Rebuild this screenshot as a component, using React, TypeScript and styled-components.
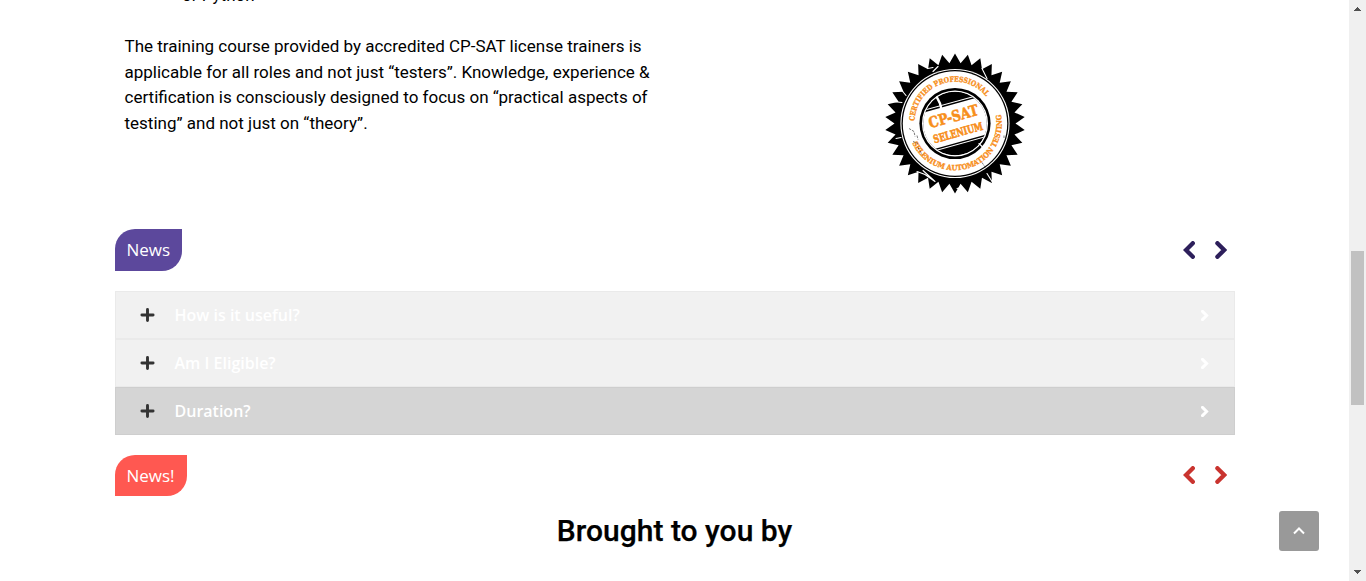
import React from "react";
import styled, { createGlobalStyle } from "styled-components";

const GlobalStyle = createGlobalStyle`
  * { box-sizing: border-box; }
  body { margin: 0; background: #fff; overflow: hidden; }
`;

const Page = styled.div`
  display: flex;
  height: 581px;
  overflow: hidden;
  font-family: Roboto, "Liberation Sans", sans-serif;
  color: #000;
`;

const Main = styled.main`
  flex: 1;
  height: 581px;
  padding: 0 114px 0 115px;
  overflow: hidden;
`;

const Intro = styled.section`
  display: grid;
  grid-template-columns: 560px 560px;
  height: 229px;
`;

const Copy = styled.div`
  padding-left: 9.5px;
  font-size: 17px;
  line-height: 25.6px;
`;

const ListTail = styled.div`
  height: 26px;
  margin: -17px 0 25px 57.5px;
`;

const Paragraph = styled.p`
  margin: 0;
  white-space: nowrap;
`;

const SealHolder = styled.div`
  display: flex;
  justify-content: center;
  padding-top: 48px;
`;

const NewsBar = styled.div<{ $height: number }>`
  display: flex;
  justify-content: space-between;
  height: ${(p) => p.$height}px;
  padding-right: 8px;
`;

const Tag = styled.span<{ $color: string; $width: number }>`
  display: flex;
  align-items: center;
  width: ${(p) => p.$width}px;
  height: 100%;
  padding: 0 0 1px 11.5px;
  border-radius: 20px 0;
  background: ${(p) => p.$color};
  color: #fff;
  font: 400 17px/1 "Open Sans", sans-serif;
`;

const Arrows = styled.div<{ $color: string; $top: number }>`
  display: flex;
  gap: 20px;
  padding-top: ${(p) => p.$top}px;
  color: ${(p) => p.$color};
`;

const Accordion = styled.div`
  margin: 20px 0;
`;

const Row = styled.div<{ $active?: boolean }>`
  display: flex;
  align-items: center;
  height: 48px;
  padding: 0 25.5px 0 24px;
  border: 1px solid ${(p) => (p.$active ? "#cecece" : "#eaeaea")};
  background: ${(p) => (p.$active ? "#d5d5d5" : "#f1f1f1")};
  color: #fff;
  font: 600 16px/1 "Open Sans", sans-serif;
`;

const PlusIcon = styled.svg`
  width: 15px;
  height: 14px;
  margin-right: 19.5px;
  color: #333;
`;

const RowArrow = styled.span`
  display: flex;
  margin-left: auto;
`;

const Heading = styled.h2`
  margin: 17px 1px 0 0;
  font-size: 30px;
  font-weight: 500;
  line-height: 36px;
  letter-spacing: 0.03px;
  text-align: center;
  -webkit-text-stroke: 0.25px #000;
`;

const TopButton = styled.button`
  position: fixed;
  left: 1279px;
  top: 511px;
  display: grid;
  place-items: center;
  width: 40px;
  height: 40px;
  padding: 0;
  border: 0;
  border-radius: 3px;
  background: #999;
`;

const Scrollbar = styled.div`
  display: flex;
  flex-direction: column;
  align-items: center;
  justify-content: space-between;
  width: 17px;
  height: 581px;
  padding: 7px 0;
  background: #f0f0f0;
  svg { display: block; }
`;

const Thumb = styled.div`
  width: 13px;
  height: 154px;
  margin-top: 74px;
  background: #c1c1c1;
`;

const Chevron = ({ left, height = 18, weight = 4.3 }: { left?: boolean; height?: number; weight?: number }) => (
  <svg width={(height * 2) / 3} height={height} viewBox="0 0 12 18" fill="none" stroke="currentColor" strokeWidth={weight} strokeLinecap="round">
    <path d={left ? "M9.8 2.2L3 9l6.8 6.8" : "M2.4 2.2L9.2 9l-6.8 6.8"} />
  </svg>
);

const TEETH = 34;
const teeth = Array.from({ length: TEETH * 2 }, (_, i) => {
  const r = i % 2 ? 60.5 : 70;
  const a = (i * Math.PI) / TEETH;
  return `${(Math.sin(a) * r).toFixed(2)},${(-Math.cos(a) * r).toFixed(2)}`;
}).join(" ");

const Seal = () => (
  <svg width="150" height="150" viewBox="-75 -75.5 150 150" fontFamily="'DejaVu Serif', serif" fontWeight="700" fill="#f78f1c">
    <defs>
      <path id="upper" d="M -40.4 -1.5 A 40.4 40.4 0 0 1 40.4 -1.5" />
      <path id="lower" d="M -46.8 0 A 46.8 46.8 0 0 0 46.8 0 A 46.8 46.8 0 0 0 44 -16" />
      <clipPath id="core"><circle r="31.8" /></clipPath>
    </defs>
    <polygon points={teeth} fill="#000" />
    <circle r="54.6" fill="#fff" />
    <circle r="53.5" fill="#000" />
    <circle r="52.2" fill="#fff" />
    <circle r="35.6" fill="#000" />
    <circle r="33" fill="#fff" />
    <g clipPath="url(#core)">
      <circle r="32" fill="#000" />
      <g transform="rotate(-15.5)">
        <rect x="-35" y="-21.5" width="70" height="1" fill="#fff" />
        <rect x="-35" y="-19" width="70" height="38" fill="#fff" />
        <rect x="-35" y="20.4" width="70" height="1" fill="#fff" />
      </g>
    </g>
    <g transform="rotate(-15.5)" textAnchor="middle" stroke="#f78f1c" strokeWidth=".6">
      <text x="0.5" y="-2" fontSize="15" textLength="51" lengthAdjust="spacingAndGlyphs">CP-SAT</text>
      <text x="0.5" y="13.5" fontSize="11" textLength="51" lengthAdjust="spacingAndGlyphs">SELENIUM</text>
    </g>
    <g fontSize="7.3" stroke="#f78f1c" strokeWidth=".35">
      <text><textPath href="#upper" startOffset="1" textLength="98" lengthAdjust="spacingAndGlyphs">CERTIFIED PROFESSIONAL</textPath></text>
      <text><textPath href="#lower" startOffset="20" textLength="136" lengthAdjust="spacingAndGlyphs">SELENIUM AUTOMATION TESTING</textPath></text>
    </g>
    <g fill="none" stroke="#fff" strokeWidth="1.1" strokeLinecap="round">
      <path d="M-63-22l10 1M-54-34l5 6M-31-59l4 4 5-1M-22-52l5-5M27-55l5 10M-38 48l8 3 10 7M-32 47l12 11M32 50l5 8M-59 15l5-1M24 20l5 5 2-5M2 65l5-1" />
      <path d="M-18-26l3 6 1 4" strokeWidth="2.4" />
    </g>
    <g fill="none" stroke="#222" strokeWidth=".6" strokeDasharray="2.5 1">
      <path d="M-46 5l5 3 1 5M-42 18l5 2M-38 12l1 4M27 39l4 6M49 12v3M-37 24l4 7" />
    </g>
  </svg>
);

const News = ({ label, color, arrow, width, height, top }: { label: string; color: string; arrow: string; width: number; height: number; top: number }) => (
  <NewsBar $height={height}>
    <Tag $color={color} $width={width}>{label}</Tag>
    <Arrows $color={arrow} $top={top}><Chevron left /><Chevron /></Arrows>
  </NewsBar>
);

const questions = ["How is it useful?", "Am I Eligible?", "Duration?"];

export default function App() {
  return (
    <Page>
      <GlobalStyle />
      <Main>
        <Intro>
          <Copy>
            <ListTail>or Python</ListTail>
            <Paragraph>
              The training course provided by accredited CP-SAT license trainers is<br />
              applicable for all roles and not just “testers”. Knowledge, experience &amp;<br />
              certification is consciously designed to focus on “practical aspects of<br />
              testing” and not just on “theory”.
            </Paragraph>
          </Copy>
          <SealHolder><Seal /></SealHolder>
        </Intro>
        <News label="News" color="#5c489c" arrow="#2d1f5b" width={67} height={42} top={12} />
        <Accordion>
          {questions.map((q, i) => (
            <Row key={q} $active={i === 2}>
              <PlusIcon viewBox="0 0 15 14" stroke="currentColor" strokeWidth="2.9" strokeLinecap="round"><path d="M7.5 1.5v11M1.9 7h11.2" /></PlusIcon>
              {q}
              <RowArrow><Chevron height={11} weight={4.8} /></RowArrow>
            </Row>
          ))}
        </Accordion>
        <News label="News!" color="#ff5851" arrow="#c9342f" width={72} height={41} top={11} />
        <Heading>Brought to you by</Heading>
      </Main>
      <Scrollbar>
        <svg width="7" height="4" viewBox="0 0 7 4" shapeRendering="crispEdges"><path d="M3 0h1v1h1v1h1v1h1v1H0V3h1V2h1V1h1z" fill="#505050" /></svg>
        <Thumb />
        <svg width="7" height="4" viewBox="0 0 7 4" shapeRendering="crispEdges"><path d="M0 0h7v1H6v1H5v1H4v1H3V3H2V2H1V1H0z" fill="#505050" /></svg>
      </Scrollbar>
      <TopButton aria-label="Back to top">
        <svg width="12" height="8" viewBox="0 0 12 8"><path d="M1 6.5L6 1.5l5 5" fill="none" stroke="#fff" strokeWidth="2" /></svg>
      </TopButton>
    </Page>
  );
}
